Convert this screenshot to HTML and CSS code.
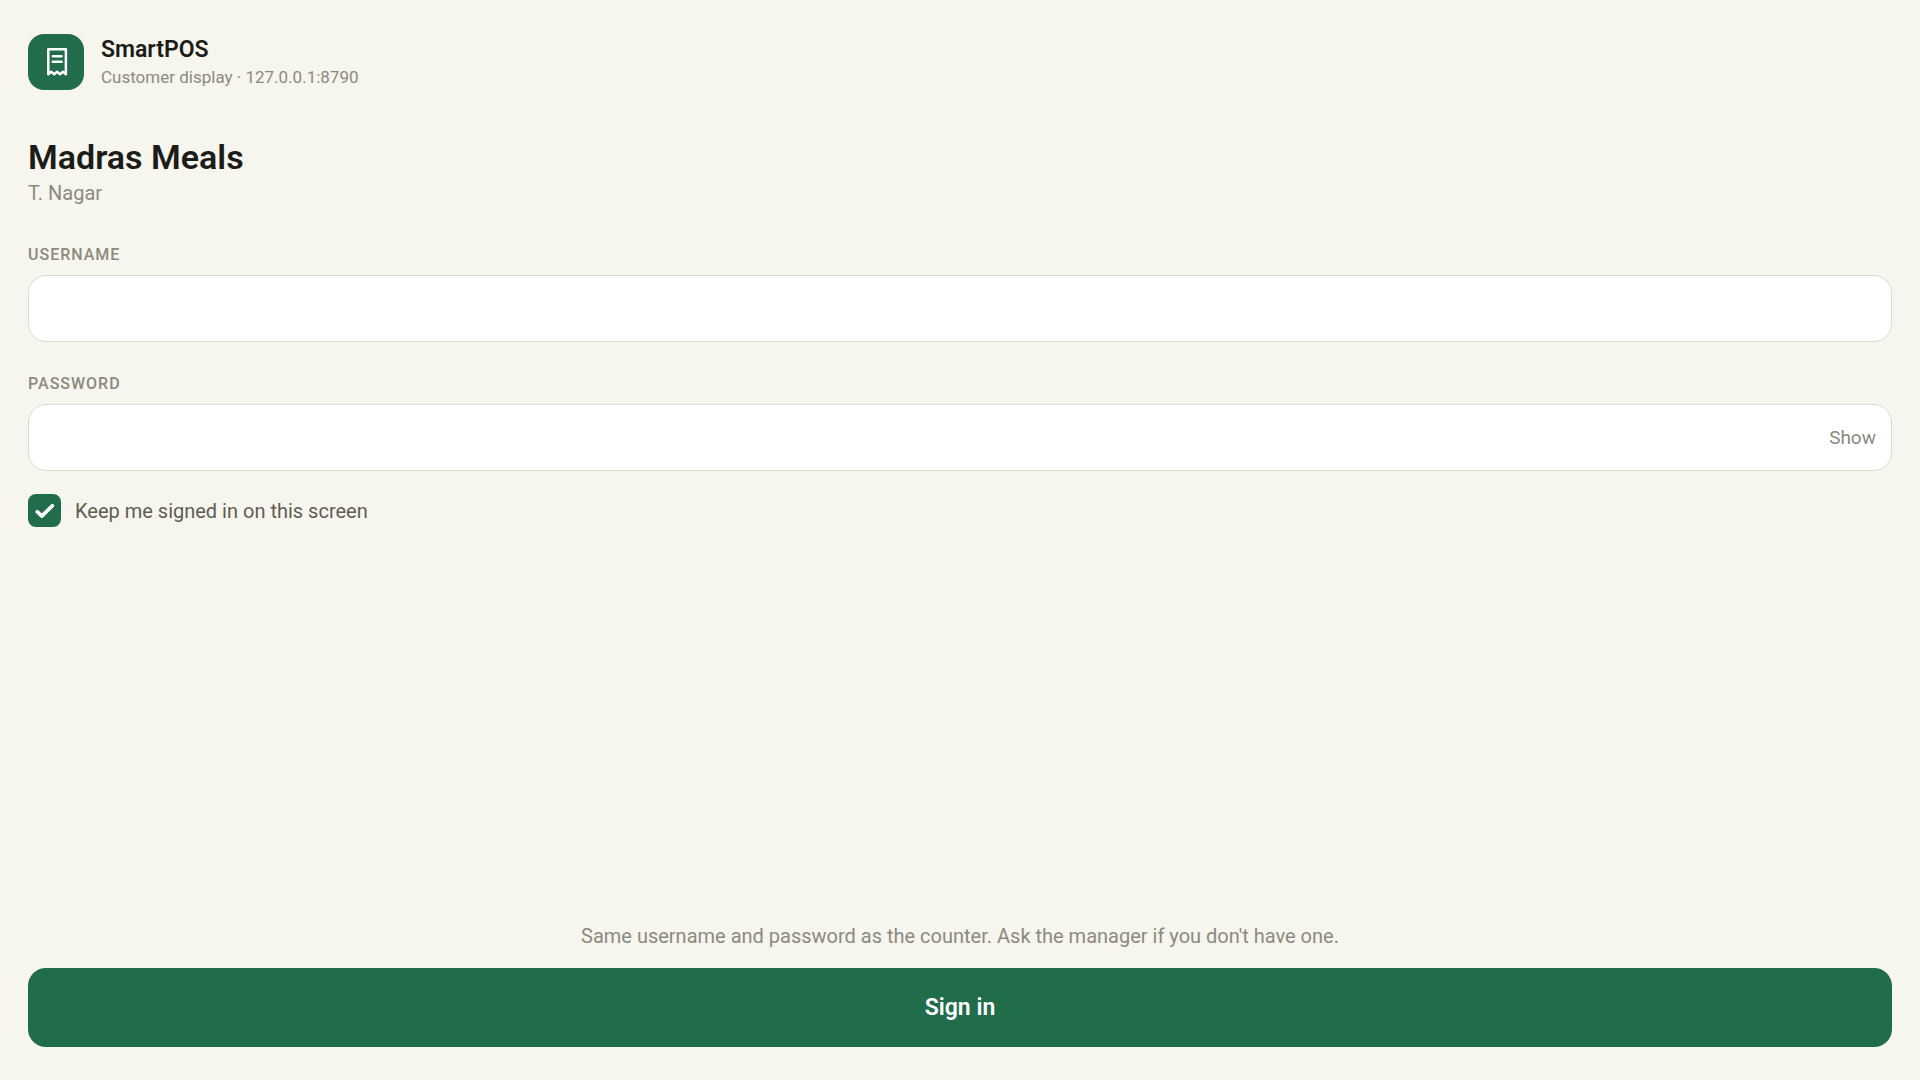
FILE: index.html
```html
<!DOCTYPE html>
<html lang="en">
<head>
    <meta charset="UTF-8">
    <meta name="viewport" content="width=device-width, initial-scale=1.0">
    <title>SmartPOS - Customer display</title>
    <link rel="stylesheet" href="styles.css">
</head>
<body>
    <form class="login">
        <header class="brand">
            <div class="brand-logo">
                <svg viewBox="0 0 56 56" fill="none" stroke="#fff" stroke-width="2.5" stroke-linejoin="round" stroke-linecap="round" aria-hidden="true">
                    <path d="M20.3 40.2V15.2H37.9V40.2L35 37.8L32 40.2L29.1 37.8L26.2 40.2L23.2 37.8Z"/>
                    <path d="M24.8 22.2H33.6M24.8 27.8H33.6"/>
                </svg>
            </div>
            <div>
                <div class="brand-name">SmartPOS</div>
                <div class="brand-info">Customer display · 127.0.0.1:8790</div>
            </div>
        </header>

        <h1>Madras Meals</h1>
        <p class="branch">T. Nagar</p>

        <label class="field-label" for="username">Username</label>
        <input class="field-input" type="text" id="username" autocomplete="username">

        <label class="field-label" for="password">Password</label>
        <div class="password-field">
            <input class="field-input" type="password" id="password" autocomplete="current-password">
            <button type="button" class="show-btn">Show</button>
        </div>

        <label class="remember">
            <span class="check">
                <input type="checkbox" checked>
                <svg viewBox="0 0 32 32" fill="none" stroke="#fff" stroke-width="3.6" stroke-linecap="round" stroke-linejoin="round" aria-hidden="true">
                    <path d="M9 17.2L13.4 21.4L23.6 11.4"/>
                </svg>
            </span>
            Keep me signed in on this screen
        </label>

        <footer class="login-footer">
            <p>Same username and password as the counter. Ask the manager if you don't have one.</p>
            <button type="submit" class="sign-in">Sign in</button>
        </footer>
    </form>
</body>
</html>
```

FILE: styles.css
```css
* {
    margin: 0;
    padding: 0;
    box-sizing: border-box;
}

body {
    font-family: Roboto, "Liberation Sans", sans-serif;
    background: #f6f5ee;
    color: #1b1b18;
}

input,
button {
    font-family: inherit;
}

.login {
    display: flex;
    flex-direction: column;
    min-height: 100vh;
    padding: 34px 28px 33px;
}

/* Brand row */
.brand {
    display: flex;
    align-items: center;
    gap: 17px;
    margin-bottom: 45px;
}

.brand-logo {
    width: 56px;
    height: 56px;
    border-radius: 16px;
    background: #206c4b;
}

.brand-logo svg {
    display: block;
}

.brand-name {
    font-size: 23px;
    font-weight: 600;
    line-height: 30px;
}

.brand-info {
    font-size: 17px;
    line-height: 24px;
    color: #8c8a7f;
}

h1 {
    font-size: 34px;
    font-weight: 600;
    line-height: 44px;
}

.branch {
    font-size: 20px;
    line-height: 28px;
    color: #8c8a7f;
}

/* Fields */
.field-label {
    margin-top: 36px;
    margin-bottom: 8px;
    font-size: 16px;
    font-weight: 500;
    line-height: 24px;
    letter-spacing: 1px;
    text-transform: uppercase;
    color: #8c8a7f;
}

.field-input {
    display: block;
    width: 100%;
    height: 67px;
    padding: 0 20px;
    border: 1px solid #dddbcf;
    border-radius: 18px;
    background: #fff;
    font-size: 20px;
    color: inherit;
}

.field-input + .field-label {
    margin-top: 30px;
}

.password-field {
    position: relative;
}

.password-field .field-input {
    padding-right: 90px;
}

.show-btn {
    position: absolute;
    top: 0;
    right: 0;
    height: 100%;
    padding: 0 16px;
    border: none;
    background: none;
    font-size: 19px;
    color: #8c8a7f;
    cursor: pointer;
}

/* Remember me */
.remember {
    display: flex;
    align-items: center;
    align-self: flex-start;
    gap: 14px;
    margin-top: 23px;
    font-size: 20px;
    line-height: 28px;
    color: #5f5d54;
    cursor: pointer;
}

.check {
    position: relative;
    width: 33px;
    height: 33px;
}

.check input {
    display: block;
    width: 100%;
    height: 100%;
    appearance: none;
    border: 2px solid #206c4b;
    border-radius: 8px;
}

.check input:checked {
    background: #206c4b;
}

.check svg {
    position: absolute;
    inset: 0;
    visibility: hidden;
    pointer-events: none;
}

.check input:checked + svg {
    visibility: visible;
}

/* Bottom action */
.login-footer {
    margin-top: auto;
    text-align: center;
}

.login-footer p {
    margin-bottom: 18px;
    font-size: 20px;
    line-height: 28px;
    color: #8c8a7f;
}

.sign-in {
    display: block;
    width: 100%;
    height: 79px;
    border: none;
    border-radius: 18px;
    background: #206c4b;
    font-size: 23px;
    font-weight: 600;
    color: #fff;
    cursor: pointer;
}
```
